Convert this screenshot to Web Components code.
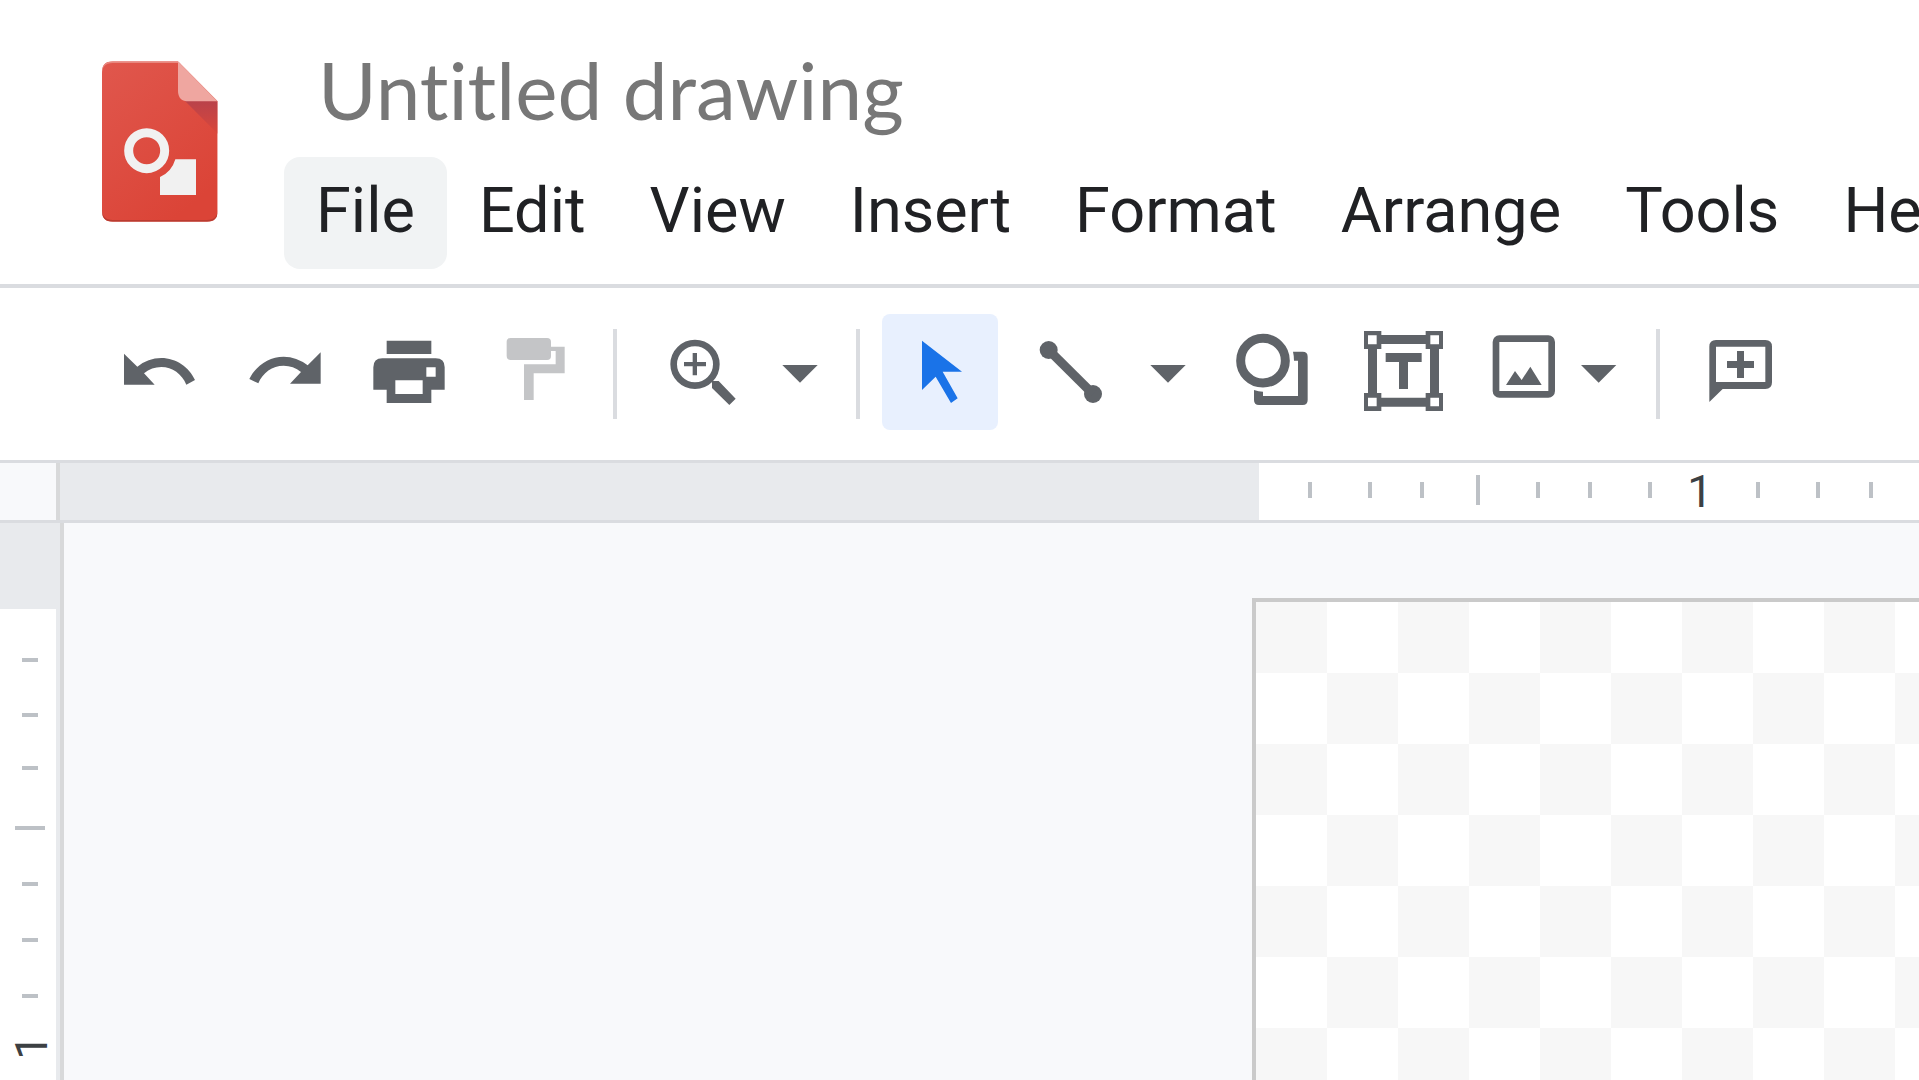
<!DOCTYPE html>
<html lang="en">
<head>
    <meta charset="UTF-8">
    <meta name="viewport" content="width=device-width, initial-scale=1.0">
    <title>Untitled drawing</title>
    <style>
        html, body {
            height: 100%;
            margin: 0;
        }
        body {
            font-family: Roboto, "Liberation Sans", sans-serif;
            color: #202124;
            background: #fff;
            overflow: hidden;
        }
    </style>
</head>
<body>
    <drawing-app>
        <drawing-header slot="header" name="Untitled drawing">
            <menu-item active>File</menu-item>
            <menu-item>Edit</menu-item>
            <menu-item>View</menu-item>
            <menu-item>Insert</menu-item>
            <menu-item>Format</menu-item>
            <menu-item>Arrange</menu-item>
            <menu-item>Tools</menu-item>
            <menu-item>Help</menu-item>
        </drawing-header>
        <tool-bar slot="toolbar">
            <tool-button icon="undo" label="Undo"></tool-button>
            <tool-button icon="redo" label="Redo"></tool-button>
            <tool-button icon="print" label="Print"></tool-button>
            <tool-button icon="paint" label="Paint format" disabled></tool-button>
            <tool-separator></tool-separator>
            <tool-button icon="zoom" label="Zoom"></tool-button>
            <tool-button icon="arrow" label="Zoom options"></tool-button>
            <tool-separator></tool-separator>
            <tool-button icon="select" label="Select" active></tool-button>
            <tool-button icon="line" label="Line"></tool-button>
            <tool-button icon="arrow" label="Line options"></tool-button>
            <tool-button icon="shape" label="Shape"></tool-button>
            <tool-button icon="text" label="Text box"></tool-button>
            <tool-button icon="image" label="Insert image"></tool-button>
            <tool-separator></tool-separator>
            <tool-button icon="comment" label="Add comment"></tool-button>
        </tool-bar>
        <work-space slot="workspace"></work-space>
    </drawing-app>

    <script>
        // Each icon: viewBox size is three units per pixel
        const ICONS = {
            undo: {
                box: '6 42 348 348',
                art: '<path d="M72 161L112 200Q144 174 184 174C228 174 268 202 285 240L259 254C246 222 217 201 184 201Q155 201 132 220L164 254H72Z"/>'
            },
            redo: {
                box: '381 42 348 348',
                art: '<path d="M662 157L623 196Q590 170 551 170C507 170 467 198 448 237L475 250C488 218 517 197 551 197Q580 197 603 216L570 251H662Z"/>'
            },
            print: {
                box: '756 42 348 348',
                art: '<path fill-rule="evenodd" d="M860 122H994V162H860ZM847 175H1007Q1034 175 1034 202V269H994V309H860V269H820V202Q820 175 847 175ZM979 202V230H1007V202ZM886 241V282H968V241Z"/>'
            },
            paint: {
                box: '1131 42 348 348',
                art: '<rect x="1220" y="114" width="133" height="66" rx="12"/><path d="M1353 140H1394V220H1301V300H1272V193H1367V153H1353Z"/>'
            },
            zoom: {
                box: '177 42 348 348',
                art: '<circle cx="345" cy="193" r="64" fill="none" stroke="currentColor" stroke-width="20"/><path d="M338 159H351V186H378V199H351V226H338V199H312V186H338ZM391 238L399 243H416L467 296L448 315L396 264V247Z"/>'
            },
            arrow: {
                box: '0 42 216 348',
                art: '<path d="M55 195H161L108 248Z"/>'
            },
            select: {
                box: '906 42 348 348',
                art: '<path d="M1026 122L1146 215H1088L1133 295L1113 309L1067 230L1026 270Z"/>'
            },
            line: {
                box: '21 42 348 348',
                art: '<circle cx="146" cy="150" r="27"/><circle cx="279" cy="282" r="27"/><path d="M146 150L279 282" stroke="currentColor" stroke-width="27"/>'
            },
            shape: {
                box: '639 42 348 348',
                art: '<circle cx="789" cy="182" r="67" fill="none" stroke="currentColor" stroke-width="27"/><path d="M879 155H908Q923 155 923 170V300Q923 315 908 315H777Q762 315 762 300V270Q776 275 789 275V288H894V182H882Q882 168 879 155Z"/>'
            },
            text: {
                box: '1014 42 348 348',
                art: '<path fill-rule="evenodd" d="M1092 93H1144V105H1277V93H1329V147H1317V279H1329V333H1277V320H1144V333H1092V279H1104V147H1092ZM1144 132V147H1131V279H1144V293H1277V279H1290V147H1277V132ZM1104 106V133H1130V106ZM1291 106V133H1317V106ZM1104 293V319H1130V293ZM1291 293V319H1317V293ZM1157 159H1265V186H1224V267H1197V186H1157Z"/>'
            },
            image: {
                box: '69 42 519 348',
                art: '<rect x="168" y="116" width="167" height="167" rx="10" fill="none" stroke="currentColor" stroke-width="20"/><path d="M198 255L225 213L245 240L271 200L305 255ZM423 195H529L476 248Z"/>'
            },
            comment: {
                box: '726 42 348 348',
                art: '<path fill-rule="evenodd" d="M828 120H976Q996 120 996 140V247Q996 267 976 267H848L808 306V140Q808 120 828 120ZM828 140V246H976V140ZM891 153H912V183H942V204H912V234H891V204H861V183H891Z"/>'
            }
        };

        // Base class, puts the markup of the element in its shadow root
        class BaseElement extends HTMLElement {
            constructor() {
                super();
                this.shadow = this.attachShadow({ mode: 'open' });
            }

            connectedCallback() {
                this.shadow.innerHTML = this.render();
            }
        }

        class DrawingApp extends BaseElement {
            render() {
                return `
                    <style>
                        :host {
                            display: flex;
                            flex-direction: column;
                            height: 100%;
                        }
                    </style>
                    <slot name="header"></slot>
                    <slot name="toolbar"></slot>
                    <slot name="workspace"></slot>
                `;
            }
        }

        class DrawingLogo extends BaseElement {
            render() {
                return `
                    <style>
                        :host {
                            display: block;
                            flex: none;
                            width: 116px;
                        }
                        svg {
                            display: block;
                            width: 100%;
                        }
                    </style>
                    <svg viewBox="66 63 348 483" aria-hidden="true">
                        <defs>
                            <linearGradient id="body" x1="0" y1="0" x2="0.6" y2="1">
                                <stop offset="0" stop-color="#e0574d"/>
                                <stop offset="1" stop-color="#db4437"/>
                            </linearGradient>
                            <linearGradient id="shade" x1="0" y1="0" x2="0" y2="1">
                                <stop offset="0" stop-color="#b8424b"/>
                                <stop offset="1" stop-color="#d9473b"/>
                            </linearGradient>
                            <clipPath id="sheet">
                                <path d="M98 64H294L413 184V513Q413 545 381 545H98Q66 545 66 513V96Q66 64 98 64Z"/>
                            </clipPath>
                        </defs>
                        <g clip-path="url(#sheet)">
                            <rect x="66" y="63" width="348" height="483" fill="url(#body)"/>
                            <path d="M66 96Q66 64 98 64H294V69H98Q66 69 66 101Z" fill="#e88880"/>
                            <path d="M66 508Q66 540 98 540H381Q413 540 413 508V546H66Z" fill="#b93c31"/>
                            <path d="M312 180L413 281V184Z" fill="url(#shade)"/>
                            <path d="M294 64L413 184H326Q294 184 294 152Z" fill="#efa6a0"/>
                        </g>
                        <circle cx="200" cy="332" r="54" fill="none" stroke="#f1f1f1" stroke-width="27"/>
                        <path d="M286 358H348V465H240V411Q275 396 286 358Z" fill="#f1f1f1"/>
                    </svg>
                `;
            }
        }

        class DrawingHeader extends BaseElement {
            render() {
                return `
                    <style>
                        :host {
                            display: flex;
                            flex: none;
                            gap: 66px;
                            padding: 33px 0 15px 102px;
                            border-bottom: 4px solid #dadce0;
                            overflow: hidden;
                        }
                        drawing-logo {
                            margin-top: 28px;
                        }
                        .main {
                            display: flex;
                            flex-direction: column;
                            flex: 1;
                            gap: 12px;
                            min-width: 0;
                        }
                        input {
                            box-sizing: border-box;
                            width: 100%;
                            height: 112px;
                            padding: 0 34px;
                            border: 0;
                            outline: 0;
                            background: none;
                            color: #777;
                            font: 80px Lato, sans-serif;
                            font-variant-ligatures: none;
                        }
                        nav {
                            display: flex;
                        }
                    </style>
                    <drawing-logo></drawing-logo>
                    <div class="main">
                        <input type="text" aria-label="Name" value="${this.getAttribute('name')}">
                        <nav><slot></slot></nav>
                    </div>
                `;
            }
        }

        class MenuItem extends BaseElement {
            render() {
                return `
                    <style>
                        :host {
                            display: block;
                            flex: none;
                        }
                        button {
                            display: block;
                            padding: 0 32px 4px;
                            border: 0;
                            border-radius: 16px;
                            background: none;
                            color: inherit;
                            font: 63px/108px Roboto, sans-serif;
                        }
                        :host([active]) button {
                            background: #f1f3f4;
                        }
                    </style>
                    <button type="button"><slot></slot></button>
                `;
            }
        }

        class ToolBar extends BaseElement {
            render() {
                return `
                    <style>
                        :host {
                            display: flex;
                            flex: none;
                            align-items: center;
                            gap: 9px;
                            padding: 26px 0 30px 102px;
                            border-bottom: 3px solid #dadce0;
                            color: #5f6368;
                        }
                    </style>
                    <slot></slot>
                `;
            }
        }

        class ToolSeparator extends BaseElement {
            render() {
                return `
                    <style>
                        :host {
                            display: block;
                            flex: none;
                            width: 4px;
                            height: 90px;
                            margin: 4px 13px 0 11px;
                            background: #dadce0;
                        }
                    </style>
                `;
            }
        }

        class ToolButton extends BaseElement {
            render() {
                const icon = ICONS[this.getAttribute('icon')];
                const disabled = this.hasAttribute('disabled') ? 'disabled' : '';
                return `
                    <style>
                        :host {
                            display: block;
                            flex: none;
                        }
                        button {
                            display: block;
                            padding: 0;
                            border: 0;
                            border-radius: 8px;
                            background: none;
                            color: inherit;
                        }
                        button:disabled {
                            color: #c4c5c7;
                        }
                        :host([active]) button {
                            background: #e8f0fe;
                            color: #1a73e8;
                        }
                        svg {
                            display: block;
                            height: 116px;
                            fill: currentColor;
                        }
                    </style>
                    <button type="button" aria-label="${this.getAttribute('label')}" ${disabled}>
                        <svg viewBox="${icon.box}" aria-hidden="true">${icon.art}</svg>
                    </button>
                `;
            }
        }

        // Ruler, horizontal by default
        // steps: length of every cell, "b" for a big mark, "n" for a number
        class DrawingRuler extends BaseElement {
            render() {
                const cells = this.getAttribute('steps').split(' ').map((step) => {
                    const size = parseInt(step);
                    if (step.endsWith('n')) {
                        return `<span class="number" style="flex-basis: ${size}px"><span>1</span></span>`;
                    }
                    const type = step.endsWith('b') ? 'big' : '';
                    return `<span class="cell" style="flex-basis: ${size}px"><i class="${type}"></i></span>`;
                });
                return `
                    <style>
                        :host {
                            display: flex;
                            background: #fff;
                            color: #3c4043;
                            font-size: 45px;
                            line-height: 56px;
                            overflow: hidden;
                        }
                        :host([vertical]) {
                            flex-direction: column;
                            background: linear-gradient(90deg, #fff 56px, #e8eaed 56px);
                        }
                        .margin {
                            flex: 0 0 var(--margin);
                            background: #e8eaed;
                        }
                        .cell, .number {
                            display: flex;
                            flex-grow: 0;
                            flex-shrink: 0;
                            align-items: center;
                            justify-content: flex-end;
                        }
                        .cell {
                            padding-bottom: 4px;
                        }
                        .number {
                            justify-content: center;
                        }
                        i {
                            width: 4px;
                            height: 16px;
                            background: #bdc1c6;
                        }
                        i.big {
                            height: 30px;
                        }
                        :host([vertical]) .cell {
                            flex-direction: column;
                            padding: 0;
                        }
                        :host([vertical]) i {
                            width: 16px;
                            height: 4px;
                        }
                        :host([vertical]) i.big {
                            width: 30px;
                        }
                        :host([vertical]) .number {
                            padding-left: 4px;
                        }
                        :host([vertical]) .number span {
                            transform: rotate(-90deg);
                        }
                    </style>
                    <div class="margin"></div>
                    ${cells.join('')}
                `;
            }
        }

        class WorkSpace extends BaseElement {
            render() {
                return `
                    <style>
                        :host {
                            display: flex;
                            flex: 1;
                            flex-direction: column;
                            min-height: 0;
                            background: #f8f9fb;
                        }
                        .top {
                            display: flex;
                            flex: none;
                            height: 57px;
                            border-bottom: 3px solid #dadce0;
                        }
                        .corner {
                            flex: none;
                            width: 56px;
                            border-right: 4px solid #d8d9da;
                        }
                        .top drawing-ruler {
                            --margin: 1199px;
                            flex: 1;
                        }
                        .bottom {
                            display: flex;
                            flex: 1;
                            min-height: 0;
                        }
                        .bottom drawing-ruler {
                            --margin: 86px;
                            flex: none;
                            width: 60px;
                            border-right: 4px solid #d8d9da;
                        }
                        main {
                            display: flex;
                            flex: 1;
                            min-width: 0;
                            padding: 75px 0 0 1188px;
                        }
                        /* transparent page */
                        .page {
                            flex: 1;
                            border: solid #cacaca;
                            border-width: 4px 0 0 4px;
                            background: repeating-conic-gradient(#fff 0 25%, #f7f7f7 0 50%) 0 0 / 142px 142px;
                        }
                    </style>
                    <div class="top">
                        <div class="corner"></div>
                        <drawing-ruler steps="53 60 52 56b 60 52 60 96n 12 60 53"></drawing-ruler>
                    </div>
                    <div class="bottom">
                        <drawing-ruler vertical steps="53 55 53 60b 56 56 56 98n"></drawing-ruler>
                        <main><div class="page"></div></main>
                    </div>
                `;
            }
        }

        customElements.define('drawing-app', DrawingApp);
        customElements.define('drawing-logo', DrawingLogo);
        customElements.define('drawing-header', DrawingHeader);
        customElements.define('menu-item', MenuItem);
        customElements.define('tool-bar', ToolBar);
        customElements.define('tool-separator', ToolSeparator);
        customElements.define('tool-button', ToolButton);
        customElements.define('drawing-ruler', DrawingRuler);
        customElements.define('work-space', WorkSpace);
    </script>
</body>
</html>
